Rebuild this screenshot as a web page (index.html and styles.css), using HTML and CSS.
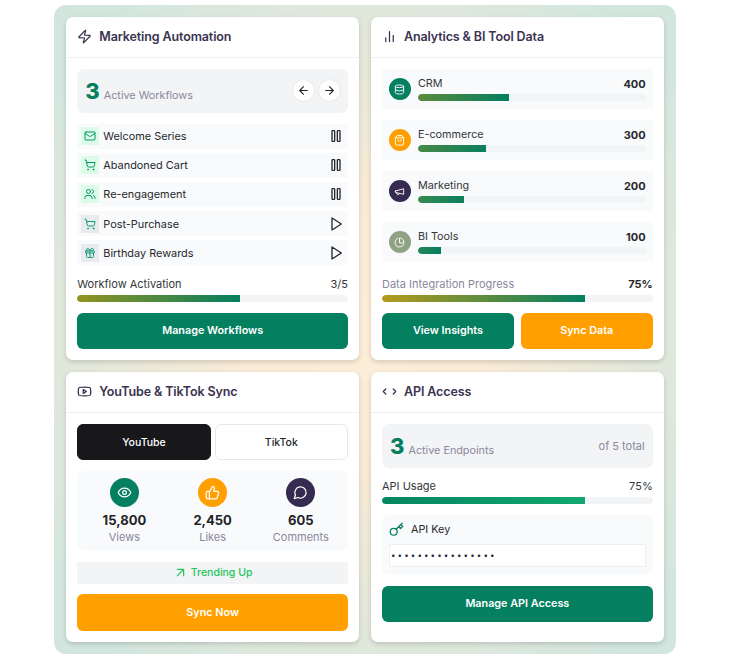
FILE: index.html
```html
<!DOCTYPE html>
<html lang="en">
<head>
<meta charset="utf-8">
<title>Dashboard</title>
<link rel="stylesheet" href="styles.css">
</head>
<body>
<svg class="sprite" aria-hidden="true">
  <symbol id="zap" viewBox="0 0 24 24"><path d="M4 14a1 1 0 0 1-.78-1.63l9.9-10.2a.5.5 0 0 1 .86.46l-1.92 6.02A1 1 0 0 0 13 10h7a1 1 0 0 1 .78 1.63l-9.9 10.2a.5.5 0 0 1-.86-.46l1.92-6.02A1 1 0 0 0 11 14z"/></symbol>
  <symbol id="bars" viewBox="0 0 24 24"><path d="M18 20V10M12 20V4M6 20v-6"/></symbol>
  <symbol id="yt" viewBox="0 0 24 24"><path d="M2.5 17a24.12 24.12 0 0 1 0-10 2 2 0 0 1 1.4-1.4 49.56 49.56 0 0 1 16.2 0A2 2 0 0 1 21.5 7a24.12 24.12 0 0 1 0 10 2 2 0 0 1-1.4 1.4 49.55 49.55 0 0 1-16.2 0A2 2 0 0 1 2.5 17"/><path d="m10 15 5-3-5-3z"/></symbol>
  <symbol id="code" viewBox="0 0 24 24"><path d="m18 16 4-4-4-4M6 8l-4 4 4 4"/></symbol>
  <symbol id="left" viewBox="0 0 24 24"><path d="m12 19-7-7 7-7M19 12H5"/></symbol>
  <symbol id="right" viewBox="0 0 24 24"><path d="M5 12h14M12 5l7 7-7 7"/></symbol>
  <symbol id="mail" viewBox="0 0 24 24"><rect x="2" y="4" width="20" height="16" rx="2"/><path d="m22 7-8.97 5.7a1.94 1.94 0 0 1-2.06 0L2 7"/></symbol>
  <symbol id="cart" viewBox="0 0 24 24"><circle cx="8" cy="21" r="1"/><circle cx="19" cy="21" r="1"/><path d="M2.05 2.05h2l2.66 12.42a2 2 0 0 0 2 1.58h9.78a2 2 0 0 0 1.95-1.57l1.65-7.43H5.12"/></symbol>
  <symbol id="users" viewBox="0 0 24 24"><path d="M16 21v-2a4 4 0 0 0-4-4H6a4 4 0 0 0-4 4v2"/><circle cx="9" cy="7" r="4"/><path d="M22 21v-2a4 4 0 0 0-3-3.87M16 3.13a4 4 0 0 1 0 7.75"/></symbol>
  <symbol id="gift" viewBox="0 0 24 24"><rect x="3" y="8" width="18" height="4" rx="1"/><path d="M12 8v13M19 12v7a2 2 0 0 1-2 2H7a2 2 0 0 1-2-2v-7M7.5 8a2.5 2.5 0 0 1 0-5A4.8 8 0 0 1 12 8a4.8 8 0 0 1 4.5-5 2.5 2.5 0 0 1 0 5"/></symbol>
  <symbol id="pause" viewBox="0 0 24 24"><rect x="14" y="4" width="4" height="16" rx="1"/><rect x="6" y="4" width="4" height="16" rx="1"/></symbol>
  <symbol id="play" viewBox="0 0 24 24"><polygon points="6 3 20 12 6 21 6 3"/></symbol>
  <symbol id="db" viewBox="0 0 24 24"><ellipse cx="12" cy="5" rx="9" ry="3"/><path d="M3 5V19A9 3 0 0 0 21 19V5M3 12A9 3 0 0 0 21 12"/></symbol>
  <symbol id="bag" viewBox="0 0 24 24"><path d="M6 2 3 6v14a2 2 0 0 0 2 2h14a2 2 0 0 0 2-2V6l-3-4ZM3 6h18M16 10a4 4 0 0 1-8 0"/></symbol>
  <symbol id="mega" viewBox="0 0 24 24"><path d="m3 11 18-5v12L3 14v-3zM11.6 16.8a3 3 0 1 1-5.8-1.6"/></symbol>
  <symbol id="pie" viewBox="0 0 24 24"><path d="M21.21 15.89A10 10 0 1 1 8 2.83M22 12A10 10 0 0 0 12 2v10z"/></symbol>
  <symbol id="eye" viewBox="0 0 24 24"><path d="M2 12s3-7 10-7 10 7 10 7-3 7-10 7-10-7-10-7Z"/><circle cx="12" cy="12" r="3"/></symbol>
  <symbol id="thumb" viewBox="0 0 24 24"><path d="M7 10v12M15 5.88 14 10h5.83a2 2 0 0 1 1.92 2.56l-2.33 8A2 2 0 0 1 17.5 22H4a2 2 0 0 1-2-2v-8a2 2 0 0 1 2-2h2.76a2 2 0 0 0 1.79-1.11L12 2a3.13 3.13 0 0 1 3 3.88Z"/></symbol>
  <symbol id="msg" viewBox="0 0 24 24"><path d="M7.9 20A9 9 0 1 0 4 16.1L2 22Z"/></symbol>
  <symbol id="up" viewBox="0 0 24 24"><path d="M7 7h10v10M7 17 17 7"/></symbol>
  <symbol id="key" viewBox="0 0 24 24"><circle cx="7.5" cy="15.5" r="5.5"/><path d="m21 2-9.6 9.6M15.5 7.5l3 3L22 7l-3-3"/></symbol>
</svg>

<main class="panel">
  <section class="card">
    <header class="card-head"><svg class="icon head-icon"><use href="#zap"/></svg><h2>Marketing Automation</h2></header>
    <div class="card-body">
      <div class="stat">
        <div class="stat-main"><span class="stat-num">3</span><span class="stat-label">Active Workflows</span></div>
        <div class="nav">
          <button class="nav-btn"><svg class="icon nav-icon"><use href="#left"/></svg></button>
          <button class="nav-btn"><svg class="icon nav-icon"><use href="#right"/></svg></button>
        </div>
      </div>
      <ul class="flows">
        <li class="flow"><span class="flow-ico on"><svg class="icon"><use href="#mail"/></svg></span><span class="flow-name">Welcome Series</span><svg class="icon flow-act"><use href="#pause"/></svg></li>
        <li class="flow"><span class="flow-ico on"><svg class="icon"><use href="#cart"/></svg></span><span class="flow-name">Abandoned Cart</span><svg class="icon flow-act"><use href="#pause"/></svg></li>
        <li class="flow"><span class="flow-ico on"><svg class="icon"><use href="#users"/></svg></span><span class="flow-name">Re-engagement</span><svg class="icon flow-act"><use href="#pause"/></svg></li>
        <li class="flow"><span class="flow-ico off"><svg class="icon"><use href="#cart"/></svg></span><span class="flow-name">Post-Purchase</span><svg class="icon flow-act"><use href="#play"/></svg></li>
        <li class="flow"><span class="flow-ico off"><svg class="icon"><use href="#gift"/></svg></span><span class="flow-name">Birthday Rewards</span><svg class="icon flow-act"><use href="#play"/></svg></li>
      </ul>
      <div class="spacer"></div>
      <div class="meter-label"><span>Workflow Activation</span><span>3/5</span></div>
      <div class="track"><div class="fill fill-olive" style="width:60%"></div></div>
      <div class="actions"><button class="btn green">Manage Workflows</button></div>
    </div>
  </section>

  <section class="card">
    <header class="card-head"><svg class="icon head-icon"><use href="#bars"/></svg><h2>Analytics &amp; BI Tool Data</h2></header>
    <div class="card-body">
      <div class="sources">
        <div class="source"><span class="dot green"><svg class="icon"><use href="#db"/></svg></span><div class="source-main"><div class="source-top"><span>CRM</span><b>400</b></div><div class="track"><div class="fill fill-a" style="width:40%"></div></div></div></div>
        <div class="source"><span class="dot orange"><svg class="icon"><use href="#bag"/></svg></span><div class="source-main"><div class="source-top"><span>E-commerce</span><b>300</b></div><div class="track"><div class="fill fill-b" style="width:30%"></div></div></div></div>
        <div class="source"><span class="dot purple"><svg class="icon"><use href="#mega"/></svg></span><div class="source-main"><div class="source-top"><span>Marketing</span><b>200</b></div><div class="track"><div class="fill fill-c" style="width:20%"></div></div></div></div>
        <div class="source"><span class="dot sage"><svg class="icon"><use href="#pie"/></svg></span><div class="source-main"><div class="source-top"><span>BI Tools</span><b>100</b></div><div class="track"><div class="fill fill-d" style="width:10%"></div></div></div></div>
      </div>
      <div class="spacer"></div>
      <div class="meter-label"><span class="muted">Data Integration Progress</span><b>75%</b></div>
      <div class="track"><div class="fill fill-gold" style="width:75%"></div></div>
      <div class="actions split"><button class="btn green">View Insights</button><button class="btn orange">Sync Data</button></div>
    </div>
  </section>

  <section class="card">
    <header class="card-head"><svg class="icon head-icon"><use href="#yt"/></svg><h2>YouTube &amp; TikTok Sync</h2></header>
    <div class="card-body">
      <div class="tabs"><button class="tab active">YouTube</button><button class="tab">TikTok</button></div>
      <div class="metrics">
        <div class="metric"><span class="metric-dot green"><svg class="icon"><use href="#eye"/></svg></span><strong>15,800</strong><span class="metric-label">Views</span></div>
        <div class="metric"><span class="metric-dot orange"><svg class="icon"><use href="#thumb"/></svg></span><strong>2,450</strong><span class="metric-label">Likes</span></div>
        <div class="metric"><span class="metric-dot purple"><svg class="icon"><use href="#msg"/></svg></span><strong>605</strong><span class="metric-label">Comments</span></div>
      </div>
      <div class="trend"><svg class="icon"><use href="#up"/></svg><span>Trending Up</span></div>
      <div class="actions sync-actions"><button class="btn orange">Sync Now</button></div>
    </div>
  </section>

  <section class="card">
    <header class="card-head"><svg class="icon head-icon"><use href="#code"/></svg><h2>API Access</h2></header>
    <div class="card-body">
      <div class="stat">
        <div class="stat-main"><span class="stat-num">3</span><span class="stat-label">Active Endpoints</span></div>
        <span class="stat-side">of 5 total</span>
      </div>
      <div class="meter-label api-label"><span>API Usage</span><span>75%</span></div>
      <div class="track"><div class="fill fill-api" style="width:75%"></div></div>
      <div class="key-box">
        <div class="key-head"><svg class="icon"><use href="#key"/></svg><span>API Key</span></div>
        <div class="key-input">••••••••••••••••</div>
      </div>
      <div class="actions"><button class="btn green">Manage API Access</button></div>
    </div>
  </section>
</main>
</body>
</html>
```

FILE: styles.css
```css
* { box-sizing: border-box; }
html, body { margin: 0; padding: 0; }
body {
  background: #fff;
  font-family: Inter, "Liberation Sans", sans-serif;
  color: #1f2328;
  padding-top: 5px;
}
h2, ul { margin: 0; padding: 0; }
button { font-family: inherit; cursor: pointer; }
.sprite { position: absolute; width: 0; height: 0; }
.icon {
  fill: none;
  stroke: currentColor;
  stroke-width: 2;
  stroke-linecap: round;
  stroke-linejoin: round;
  flex: none;
}

.panel {
  width: 621.4px;
  height: 649px;
  margin-left: 54.3px;
  padding: 12px;
  border-radius: 12px;
  background: radial-gradient(ellipse at center, #fdeed8 0%, #f9ebd7 30%, #d2e6de 90%);
  display: grid;
  grid-template-columns: 1fr 1fr;
  grid-template-rows: 343px 270px;
  gap: 12px;
}
.card {
  background: #fff;
  border-radius: 7px;
  box-shadow: 0 2px 5px rgba(0, 0, 0, .16);
  display: flex;
  flex-direction: column;
  min-width: 0;
}
.card-head {
  height: 41px;
  flex: none;
  display: flex;
  align-items: center;
  gap: 7px;
  padding: 0 11px 2px;
  border-bottom: 1px solid #f0f1f3;
}
.head-icon { width: 15px; height: 15px; color: #3a3350; }
.card-head h2 {
  font-size: 12.5px;
  font-weight: 600;
  letter-spacing: -.12px;
  color: #3a3350;
}
.card-body {
  flex: 1;
  padding: 11px;
  display: flex;
  flex-direction: column;
  min-height: 0;
}
.spacer { flex: 1; }

.stat {
  height: 43.5px;
  flex: none;
  background: #f3f4f6;
  border-radius: 7px;
  padding: 0 8px;
  display: flex;
  align-items: center;
  justify-content: space-between;
}
.stat-main { display: flex; align-items: baseline; gap: 4px; }
.stat-num { font-size: 22px; line-height: 26px; font-weight: 800; color: #047f5f; }
.stat-label { font-size: 10.8px; color: #8a879c; }
.stat-side { font-size: 11px; color: #8a879c; }
.nav { display: flex; gap: 4.5px; }
.nav-btn {
  width: 21px;
  height: 21px;
  padding: 0;
  border: 0;
  border-radius: 50%;
  background: #fff;
  color: #1f2328;
  display: flex;
  align-items: center;
  justify-content: center;
  box-shadow: 0 0 2px rgba(0, 0, 0, .12);
}
.nav-icon { width: 13px; height: 13px; }

.flows { list-style: none; margin-top: 11px; display: flex; flex-direction: column; gap: 4px; }
.flow {
  height: 25.2px;
  background: #f9fafb;
  padding: 0 4px;
  display: flex;
  align-items: center;
  gap: 4px;
  font-size: 10.9px;
  color: #25282c;
}
.flow-name { flex: 1; }
.flow-ico {
  width: 18px;
  height: 18px;
  display: flex;
  align-items: center;
  justify-content: center;
}
.flow-ico .icon { width: 12px; height: 12px; }
.flow-ico.on { background: #dcfce7; color: #059669; }
.flow-ico.off { background: #e9ebee; color: #0f9d7a; }
.flow-act { width: 16px; height: 16px; color: #25282c; }

.meter-label {
  display: flex;
  justify-content: space-between;
  align-items: center;
  font-size: 11px;
  line-height: 14px;
  color: #33363a;
  margin-bottom: 4px;
}
.meter-label b { font-size: 11px; font-weight: 700; color: #25282c; }
.muted { color: #8a879c; }
.api-label { margin-top: 11px; }
.track { height: 7px; flex: none; background: #f3f4f6; border-radius: 4px; overflow: hidden; }
.fill { height: 100%; border-radius: 4px 0 0 4px; }
.fill-olive { background: linear-gradient(90deg, #949322, #047f5f); }
.fill-gold { background: linear-gradient(90deg, #b59a1e, #047f5f); }
.fill-a { background: linear-gradient(90deg, #5c8b3c, #047f5f); }
.fill-b { background: linear-gradient(90deg, #488a47, #0a7f5f); }
.fill-c { background: linear-gradient(90deg, #388a50, #0c7f5f); }
.fill-d { background: linear-gradient(90deg, #228555, #047f5f); }
.fill-api { background: linear-gradient(90deg, #058560, #10a870); }

.actions { margin-top: 11px; display: flex; gap: 7px; flex: none; }
.sync-actions { margin-top: 10.5px; }
.btn {
  flex: 1;
  height: 36.5px;
  border: 0;
  border-radius: 6px;
  font-size: 10.8px;
  font-weight: 600;
  color: #fff;
  padding: 0;
}
.green { background: #047f5f; color: #fff; }
.orange { background: #ff9f00; color: #fff; }
.purple { background: #352a50; color: #fff; }
.sage { background: #8fa283; color: #fff; }

.sources { display: flex; flex-direction: column; gap: 11px; }
.source {
  height: 40px;
  background: #f9fafb;
  padding: 0 7px;
  display: flex;
  align-items: center;
  gap: 7px;
}
.dot {
  width: 22px;
  height: 22px;
  border-radius: 50%;
  flex: none;
  display: flex;
  align-items: center;
  justify-content: center;
}
.dot .icon { width: 11px; height: 11px; }
.source-main { flex: 1; min-width: 0; }
.source-top {
  display: flex;
  justify-content: space-between;
  align-items: center;
  font-size: 10.8px;
  line-height: 14px;
  color: #33363a;
  margin-bottom: 3px;
}
.source-top b { font-size: 11px; font-weight: 700; color: #25282c; }

.tabs { display: flex; gap: 4px; flex: none; }
.tab {
  flex: 1;
  height: 36px;
  border: 1px solid #e7e8ec;
  border-radius: 6px;
  background: #fff;
  color: #25282c;
  font-size: 10.5px;
  font-weight: 500;
  padding: 0;
}
.tab.active { background: #18181b; border-color: #18181b; color: #fff; }

.metrics {
  margin-top: 11px;
  height: 80px;
  flex: none;
  background: #f9fafb;
  border-radius: 7px;
  padding: 7px 3px 0;
  display: grid;
  grid-template-columns: repeat(3, 1fr);
}
.metric { display: flex; flex-direction: column; align-items: center; }
.metric-dot {
  width: 29px;
  height: 29px;
  border-radius: 50%;
  display: flex;
  align-items: center;
  justify-content: center;
}
.metric-dot .icon { width: 15px; height: 15px; }
.metric strong { font-size: 13px; line-height: 16px; font-weight: 700; margin-top: 5px; color: #1f2328; }
.metric-label { font-size: 11px; line-height: 14px; margin-top: 2px; color: #8a879c; }

.trend {
  margin-top: 10.5px;
  height: 22px;
  flex: none;
  background: #f3f4f6;
  display: flex;
  align-items: center;
  justify-content: center;
  gap: 3px;
  font-size: 10.5px;
  font-weight: 500;
  color: #22c55e;
}
.trend .icon { width: 15px; height: 15px; }

.key-box {
  margin-top: 11px;
  height: 60px;
  flex: none;
  background: #f9fafb;
  border-radius: 7px;
  padding: 8px 7px 0;
}
.key-head {
  display: flex;
  align-items: center;
  gap: 7px;
  height: 14px;
  font-size: 10.8px;
  color: #25282c;
}
.key-head .icon { width: 15px; height: 15px; color: #047f5f; }
.key-input {
  margin-top: 7px;
  height: 23.5px;
  background: #fff;
  border: 1px solid #eceef1;
  padding: 0 1px 0 1px;
  font-size: 8px;
  line-height: 21px;
  letter-spacing: 2.1px;
  color: #25282c;
}
```
